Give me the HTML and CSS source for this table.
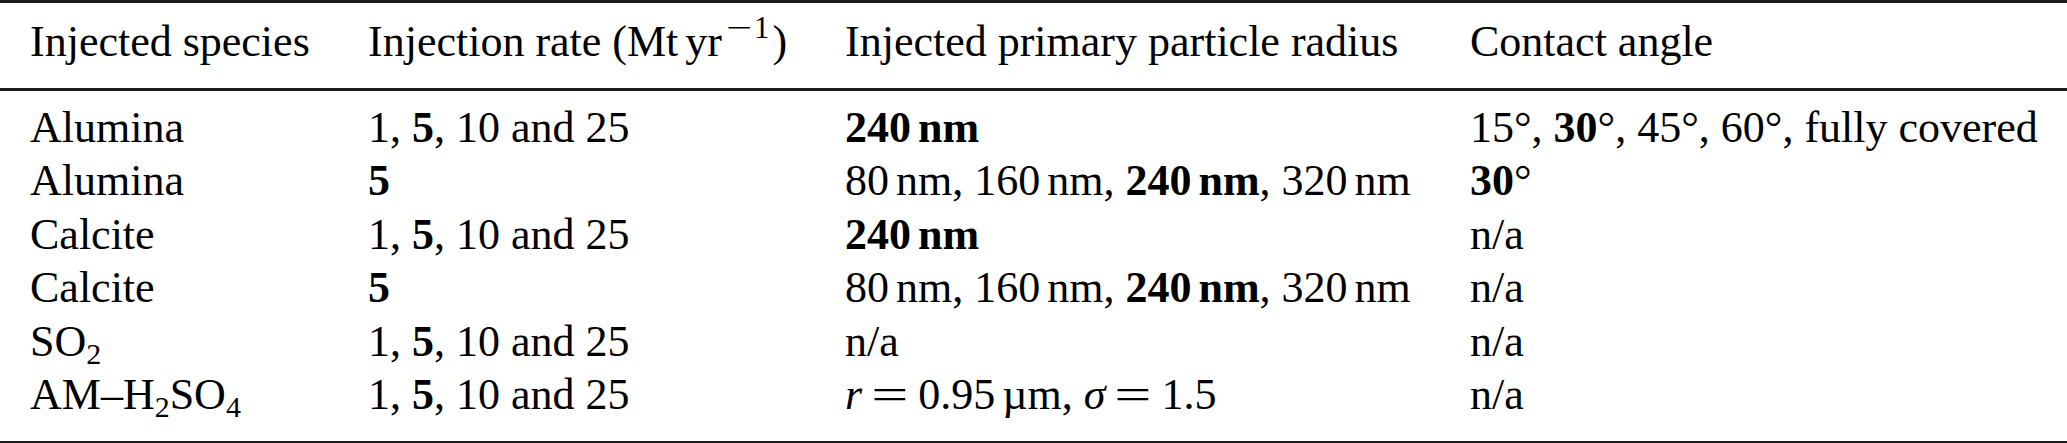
FILE: index.html
```html
<!DOCTYPE html>
<html lang="en">
<head>
<meta charset="utf-8">
<title>Injection scenarios</title>
<link rel="stylesheet" href="styles.css">
</head>
<body>
<div class="tbl">
  <div class="row head">
    <div>Injected species</div>
    <div>Injection rate (Mt<span class="th"></span>yr<span class="sup"><span class="minus">−</span>1</span>)</div>
    <div>Injected primary particle radius</div>
    <div>Contact angle</div>
  </div>
  <div class="body">
    <div class="row">
      <div>Alumina</div>
      <div>1, <b>5</b>, 10 and 25</div>
      <div><b>240<span class="th"></span>nm</b></div>
      <div>15°, <b>30</b>°, 45°, 60°, fully covered</div>
    </div>
    <div class="row">
      <div>Alumina</div>
      <div><b>5</b></div>
      <div>80<span class="th"></span>nm, 160<span class="th"></span>nm, <b>240<span class="th"></span>nm</b>, 320<span class="th"></span>nm</div>
      <div><b>30</b>°</div>
    </div>
    <div class="row">
      <div>Calcite</div>
      <div>1, <b>5</b>, 10 and 25</div>
      <div><b>240<span class="th"></span>nm</b></div>
      <div>n/a</div>
    </div>
    <div class="row">
      <div>Calcite</div>
      <div><b>5</b></div>
      <div>80<span class="th"></span>nm, 160<span class="th"></span>nm, <b>240<span class="th"></span>nm</b>, 320<span class="th"></span>nm</div>
      <div>n/a</div>
    </div>
    <div class="row">
      <div>SO<span class="sub">2</span></div>
      <div>1, <b>5</b>, 10 and 25</div>
      <div>n/a</div>
      <div>n/a</div>
    </div>
    <div class="row">
      <div>AM–H<span class="sub">2</span>SO<span class="sub">4</span></div>
      <div>1, <b>5</b>, 10 and 25</div>
      <div><i>r</i><span class="eq">=</span>0.95<span class="th"></span>µm, <i>σ</i><span class="eq">=</span>1.5</div>
      <div>n/a</div>
    </div>
  </div>
</div>
</body>
</html>
```
FILE: styles.css
```css
html, body {
  margin: 0;
  padding: 0;
  background: #ffffff;
}

body {
  font-family: "Liberation Serif", "Times New Roman", serif;
  font-size: 44px;
  color: #000000;
}

.tbl {
  border-top: 3px solid #1c1c1c;
  border-bottom: 3px solid #1c1c1c;
}

.row {
  display: grid;
  grid-template-columns: 338px 477px 625px 1fr;
  padding-left: 30px;
  line-height: 53.5px;
  white-space: nowrap;
}

.head {
  padding-top: 12px;
  padding-bottom: 19px;
  border-bottom: 3px solid #1c1c1c;
}

.body {
  padding-top: 10px;
  padding-bottom: 19px;
}

b {
  font-weight: bold;
}

.th {
  display: inline-block;
  width: 7px;
}

.sub {
  font-size: 0.68em;
  vertical-align: -0.28em;
  line-height: 0;
}

.sup {
  font-size: 0.7em;
  vertical-align: 0.6em;
  line-height: 0;
  margin-right: 3px;
}

.minus {
  display: inline-block;
  width: 30px;
  margin-left: 2px;
  text-align: center;
  transform: scaleX(1.5);
}

.eq {
  display: inline-block;
  width: 34px;
  margin: 0 11px;
  text-align: center;
  transform: scaleX(1.5);
}
```
